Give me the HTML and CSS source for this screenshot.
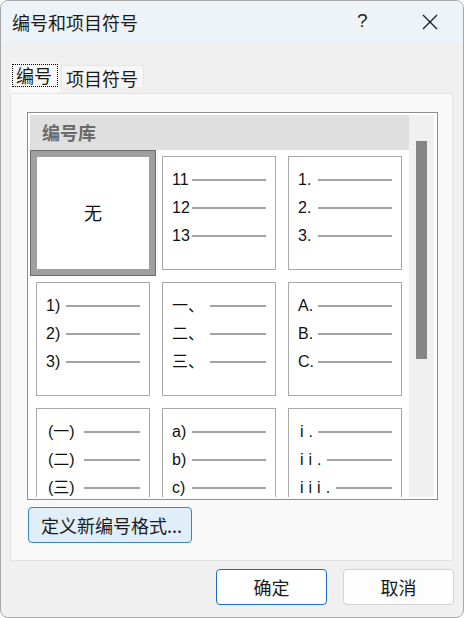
FILE: index.html
```html
<!DOCTYPE html>
<html lang="zh-CN">
<head>
  <meta charset="UTF-8">
  <title>编号和项目符号</title>
  <link rel="stylesheet" href="styles.css">
</head>
<body>

  <div class="dialog">
    <div class="titlebar">
      <span class="title">编号和项目符号</span>
      <span class="help">?</span>
      <span class="close">
        <svg width="16" height="16" viewBox="0 0 16 16"><path d="M1 1L15 15M15 1L1 15" stroke="#1b1b1b" stroke-width="1.3" fill="none"/></svg>
      </span>
    </div>

    <div class="content">
      <div class="tabs">
        <div class="tab active"><span class="focus">编号</span></div>
        <div class="tab">项目符号</div>
      </div>

      <div class="panel">
        <div class="listbox">
          <div class="lib">
            <div class="lib-head">编号库</div>
            <div class="grid">
              <div class="cell selected"><span class="none">无</span></div>

              <div class="cell">
                <div class="row"><span class="lbl w20">11</span><i class="dash"></i></div>
                <div class="row"><span class="lbl w20">12</span><i class="dash"></i></div>
                <div class="row"><span class="lbl w20">13</span><i class="dash"></i></div>
              </div>

              <div class="cell">
                <div class="row"><span class="lbl w20">1.</span><i class="dash"></i></div>
                <div class="row"><span class="lbl w20">2.</span><i class="dash"></i></div>
                <div class="row"><span class="lbl w20">3.</span><i class="dash"></i></div>
              </div>

              <div class="cell">
                <div class="row"><span class="lbl w20">1)</span><i class="dash"></i></div>
                <div class="row"><span class="lbl w20">2)</span><i class="dash"></i></div>
                <div class="row"><span class="lbl w20">3)</span><i class="dash"></i></div>
              </div>

              <div class="cell">
                <div class="row"><span class="lbl w38">一、</span><i class="dash"></i></div>
                <div class="row"><span class="lbl w38">二、</span><i class="dash"></i></div>
                <div class="row"><span class="lbl w38">三、</span><i class="dash"></i></div>
              </div>

              <div class="cell">
                <div class="row"><span class="lbl w20">A.</span><i class="dash"></i></div>
                <div class="row"><span class="lbl w20">B.</span><i class="dash"></i></div>
                <div class="row"><span class="lbl w20">C.</span><i class="dash"></i></div>
              </div>

              <div class="cell">
                <div class="row"><span class="lbl w38 pad">(一)</span><i class="dash"></i></div>
                <div class="row"><span class="lbl w38 pad">(二)</span><i class="dash"></i></div>
                <div class="row"><span class="lbl w38 pad">(三)</span><i class="dash"></i></div>
              </div>

              <div class="cell">
                <div class="row"><span class="lbl w20">a)</span><i class="dash"></i></div>
                <div class="row"><span class="lbl w20">b)</span><i class="dash"></i></div>
                <div class="row"><span class="lbl w20">c)</span><i class="dash"></i></div>
              </div>

              <div class="cell">
                <div class="row"><span class="lbl roman pad r1">i.</span><i class="dash"></i></div>
                <div class="row"><span class="lbl roman pad r2">ii.</span><i class="dash"></i></div>
                <div class="row"><span class="lbl roman pad r3">iii.</span><i class="dash"></i></div>
              </div>
            </div>
          </div>
          <div class="scroll"><div class="thumb"></div></div>
        </div>

        <button class="btn-define">定义新编号格式...</button>
      </div>

      <div class="actions">
        <button class="btn primary">确定</button>
        <button class="btn">取消</button>
      </div>
    </div>
  </div>

</body>
</html>
```

FILE: styles.css
```css
* { box-sizing: border-box; }
body { margin: 0; background: #ffffff; font-family: "Noto Sans CJK SC", "Liberation Sans", sans-serif; color: #1a1a1a; }

.dialog { width: 464px; height: 618px; background: #f0f0f0; border: 1px solid #a8a8a8; border-radius: 8px; overflow: hidden; }

.titlebar { height: 42px; background: #eef3f8; display: flex; align-items: center; padding-left: 11px; }
.title { font-size: 18px; flex: 1; }
.help { font-family: "Liberation Sans", sans-serif; font-size: 19px; width: 64px; color: #222; margin-top: -2px; }
.close { width: 42px; display: flex; align-items: center; padding-left: 1px; }
.close svg { display: block; }

.content { padding: 0 9px; }

.tabs { display: flex; align-items: flex-start; margin-top: 20px; height: 30px; }
.tab { font-size: 18px; }
.tab.active { width: 50px; height: 30px; background: #f9f9f9; padding: 1px 0 0 2px; }
.focus { display: block; width: 46px; height: 23px; border: 1px dotted #000; line-height: 20px; padding-left: 3px; }
.tab:not(.active) { margin: 2px 0 0 1px; width: 83px; height: 22px; background: #f6f6f6; border: 1px solid #e6e6e6; border-bottom: none; line-height: 24px; padding-left: 4px; }

.panel { width: 443px; height: 468px; background: #f9f9f9; border: 1px solid #e3e3e3; padding: 18px 15px 16px 16px; }

.listbox { width: 411px; height: 388px; border: 1px solid #8d8d8d; background: #ffffff; padding: 2px; display: flex; }
.lib { width: 379px; height: 382px; overflow: hidden; }
.lib-head { height: 35px; background: #dfdfdf; color: #6b6b6b; font-weight: bold; font-size: 18px; line-height: 34px; padding-left: 12px; }

.grid { display: grid; grid-template-columns: repeat(3, 114px); grid-auto-rows: 114px; gap: 12px; padding: 6px 0 0 6px; }
.cell { border: 1px solid #a8a8a8; background: #ffffff; padding: 9px 9px 0 9px; font-family: "Liberation Sans", "Noto Sans CJK SC", sans-serif; font-size: 16px; color: #111; }
.cell.selected { border-color: #a0a0a0; box-shadow: 0 0 0 5px #a0a0a0, 0 0 0 6px #6c6c6c; display: flex; align-items: center; justify-content: center; padding: 0; }
.none { font-family: "Noto Sans CJK SC", sans-serif; font-size: 18px; margin-top: -2px; }

.row { height: 28px; display: flex; align-items: center; }
.lbl { flex: none; line-height: 28px; margin-top: -1px; }
.w20 { width: 20px; }
.w38 { width: 38px; }
.pad { padding-left: 2px; }
.roman { letter-spacing: 5px; }
.r1 { width: 20px; }
.r2 { width: 29px; }
.r3 { width: 38px; }
.dash { flex: 1; height: 2px; background: #a3a3a3; }

.scroll { width: 25px; height: 382px; background: #f0f0f0; padding: 26px 0 0 7px; }
.thumb { width: 11px; height: 218px; background: #858585; }

.btn-define { display: block; margin: 7px 0 0 1px; width: 164px; height: 36px; background: #e0eef9; border: 1px solid #3c82c9; border-radius: 4px; font-family: "Noto Sans CJK SC", sans-serif; font-size: 18px; color: #1a1a1a; text-align: left; padding: 0 0 0 12px; }

.actions { display: flex; justify-content: flex-end; gap: 16px; margin-top: 8px; }
.btn { width: 111px; height: 36px; background: #fdfdfd; border: 1px solid #d2d2d2; border-radius: 4px; font-family: "Noto Sans CJK SC", sans-serif; font-size: 18px; color: #1a1a1a; padding: 0; }
.btn.primary { background: #ffffff; border-color: #1a6fc4; }
```
